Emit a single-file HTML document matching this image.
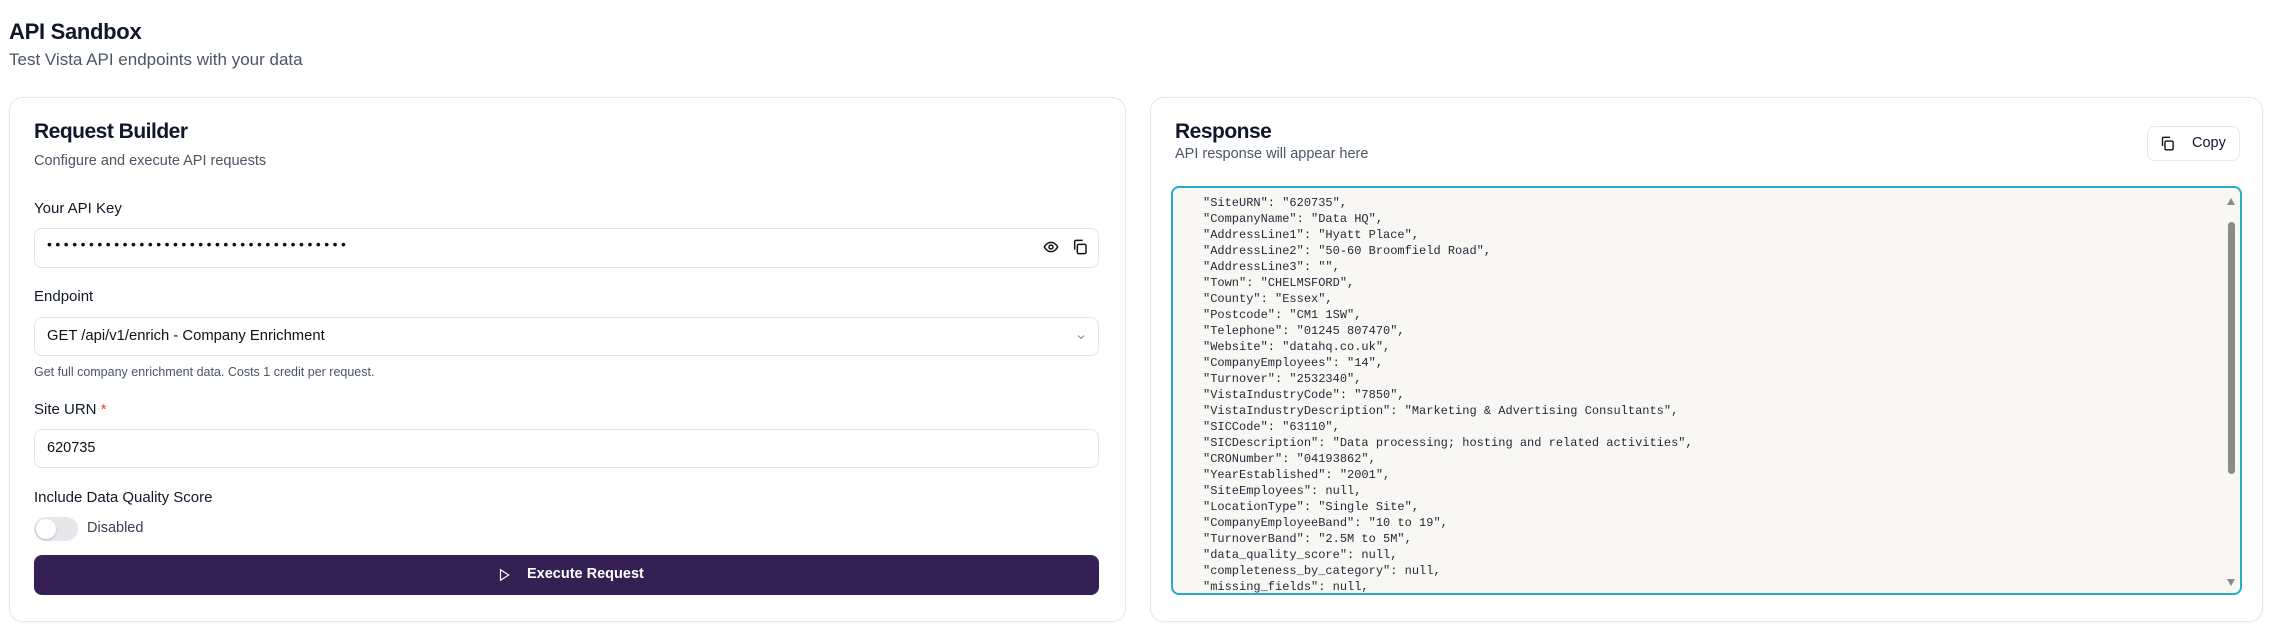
<!DOCTYPE html>
<html><head><meta charset="utf-8"><style>
*{box-sizing:border-box;margin:0;padding:0}
body{width:2273px;height:640px;background:#fff;font-family:"Liberation Sans",sans-serif;color:#0f1729;position:relative;overflow:hidden}
.a{position:absolute}
.card{position:absolute;border:1px solid #e5e7eb;border-radius:14px;background:#fff;box-shadow:0 1px 2px rgba(0,0,0,.04)}
.inp{position:absolute;border:1px solid #e2e4e8;border-radius:8px;background:#fff}
.lbl{position:absolute;font-size:15px;font-weight:500;color:#111827}
pre{font-family:"Liberation Mono",monospace;font-size:12px;line-height:16px;color:#1f2937}
</style></head><body>
<div class="a" style="left:9px;top:19px;font-size:22px;font-weight:700;letter-spacing:-0.3px">API Sandbox</div>
<div class="a" style="left:9px;top:50px;font-size:17px;color:#4b5563">Test Vista API endpoints with your data</div>

<div class="card" style="left:9px;top:97px;width:1117px;height:525px"></div>
<div class="a" style="left:34px;top:120px;font-size:21px;font-weight:600;letter-spacing:-0.5px">Request Builder</div>
<div class="a" style="left:34px;top:153px;font-size:14.5px;color:#4b5563">Configure and execute API requests</div>
<div class="lbl" style="left:34px;top:200px">Your API Key</div>
<div class="inp" style="left:34px;top:228px;width:1065px;height:40px"></div>
<div class="a" style="left:47px;top:236px;font-size:14px;letter-spacing:3.5px;color:#111">••••••••••••••••••••••••••••••••••••</div>
<svg class="a" style="left:1043px;top:239px" width="16" height="16" viewBox="0 0 24 24" fill="none" stroke="#111" stroke-width="2.2"><path d="M2 12s3.5-7 10-7 10 7 10 7-3.5 7-10 7S2 12 2 12z"/><circle cx="12" cy="12" r="3"/></svg>
<svg class="a" style="left:1072px;top:239px" width="16" height="16" viewBox="0 0 24 24" fill="none" stroke="#111" stroke-width="2.2"><rect x="8" y="8" width="13" height="14" rx="2"/><path d="M4 16V4a2 2 0 0 1 2-2h10"/></svg>
<div class="lbl" style="left:34px;top:288px">Endpoint</div>
<div class="inp" style="left:34px;top:317px;width:1065px;height:39px"></div>
<div class="a" style="left:47px;top:328px;font-size:14.8px;color:#111">GET /api/v1/enrich - Company Enrichment</div>
<svg class="a" style="left:1075px;top:331px" width="12" height="12" viewBox="0 0 24 24" fill="none" stroke="#888" stroke-width="2"><path d="M6 9l6 6 6-6"/></svg>
<div class="a" style="left:34px;top:365px;font-size:12.5px;color:#4b5563">Get full company enrichment data. Costs 1 credit per request.</div>
<div class="lbl" style="left:34px;top:401px">Site URN <span style="color:#ef4444">*</span></div>
<div class="inp" style="left:34px;top:429px;width:1065px;height:39px"></div>
<div class="a" style="left:47px;top:440px;font-size:14.5px;color:#111">620735</div>
<div class="lbl" style="left:34px;top:489px">Include Data Quality Score</div>
<div class="a" style="left:34px;top:517px;width:44px;height:24px;border-radius:12px;background:#e5e7eb"></div>
<div class="a" style="left:36px;top:519px;width:20px;height:20px;border-radius:10px;background:#fff;box-shadow:0 1px 2px rgba(0,0,0,.2)"></div>
<div class="a" style="left:87px;top:520px;font-size:14.5px;color:#374151">Disabled</div>
<div class="a" style="left:34px;top:555px;width:1065px;height:40px;border-radius:8px;background:#342052"></div>
<svg class="a" style="left:497px;top:568px" width="14" height="14" viewBox="0 0 24 24" fill="none" stroke="#fff" stroke-width="2"><path d="M6 3l14 9-14 9z"/></svg>
<div class="a" style="left:527px;top:566px;font-size:14.5px;font-weight:600;color:#fff">Execute Request</div>

<div class="card" style="left:1150px;top:97px;width:1113px;height:525px"></div>
<div class="a" style="left:1175px;top:120px;font-size:21px;font-weight:600;letter-spacing:-0.5px">Response</div>
<div class="a" style="left:1175px;top:146px;font-size:14.5px;color:#4b5563">API response will appear here</div>
<div class="a" style="left:2147px;top:126px;width:93px;height:35px;border:1px solid #e5e7eb;border-radius:8px"></div>
<svg class="a" style="left:2160px;top:136px" width="15" height="15" viewBox="0 0 24 24" fill="none" stroke="#111" stroke-width="2.2"><rect x="8" y="8" width="13" height="14" rx="2"/><path d="M4 16V4a2 2 0 0 1 2-2h10"/></svg>
<div class="a" style="left:2192px;top:135px;font-size:14.5px;font-weight:500">Copy</div>
<div class="a" style="left:1171px;top:186px;width:1071px;height:409px;border:2px solid #2aa9cc;border-radius:8px;background:#f8f7f4;overflow:hidden">
<pre class="a" style="left:30px;top:7px">"SiteURN": "620735",
"CompanyName": "Data HQ",
"AddressLine1": "Hyatt Place",
"AddressLine2": "50-60 Broomfield Road",
"AddressLine3": "",
"Town": "CHELMSFORD",
"County": "Essex",
"Postcode": "CM1 1SW",
"Telephone": "01245 807470",
"Website": "datahq.co.uk",
"CompanyEmployees": "14",
"Turnover": "2532340",
"VistaIndustryCode": "7850",
"VistaIndustryDescription": "Marketing &amp; Advertising Consultants",
"SICCode": "63110",
"SICDescription": "Data processing; hosting and related activities",
"CRONumber": "04193862",
"YearEstablished": "2001",
"SiteEmployees": null,
"LocationType": "Single Site",
"CompanyEmployeeBand": "10 to 19",
"TurnoverBand": "2.5M to 5M",
"data_quality_score": null,
"completeness_by_category": null,
"missing_fields": null,</pre>
<div class="a" style="left:1055px;top:34px;width:7px;height:252px;border-radius:4px;background:#8a8a8a"></div>
<div class="a" style="left:1054px;top:10px;width:0;height:0;border-left:4px solid transparent;border-right:4px solid transparent;border-bottom:7px solid #8a8a8a"></div>
<div class="a" style="left:1054px;top:391px;width:0;height:0;border-left:4px solid transparent;border-right:4px solid transparent;border-top:7px solid #8a8a8a"></div>
</div>
</body></html>
